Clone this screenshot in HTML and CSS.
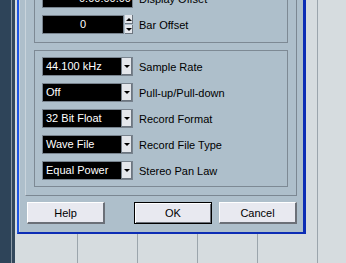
FILE: index.html
```html
<!DOCTYPE html>
<html lang="en">
<head>
    <meta charset="UTF-8">
    <title>Project Setup</title>
    <link rel="stylesheet" href="styles.css">
</head>
<body>
<div class="desk">
    <div class="strip"></div>
    <div class="workspace"></div>

    <div class="dialog">
        <div class="frame">
            <div class="group group-offsets">
                <div class="row">
                    <div class="field wide">0:00:00.00</div>
                    <span class="label">Display Offset</span>
                </div>
                <div class="row">
                    <div class="spin">
                        <div class="field num">0</div>
                        <div class="arrows">
                            <span class="arrow-btn"><i class="tri up"></i></span>
                            <span class="arrow-btn"><i class="tri"></i></span>
                        </div>
                    </div>
                    <span class="label">Bar Offset</span>
                </div>
            </div>

            <div class="group group-format">
                <div class="row">
                    <div class="combo"><span class="value">44.100 kHz</span><span class="drop"><i class="tri"></i></span></div>
                    <span class="label">Sample Rate</span>
                </div>
                <div class="row">
                    <div class="combo"><span class="value">Off</span><span class="drop"><i class="tri"></i></span></div>
                    <span class="label">Pull-up/Pull-down</span>
                </div>
                <div class="row">
                    <div class="combo"><span class="value">32 Bit Float</span><span class="drop"><i class="tri"></i></span></div>
                    <span class="label">Record Format</span>
                </div>
                <div class="row">
                    <div class="combo"><span class="value">Wave File</span><span class="drop"><i class="tri"></i></span></div>
                    <span class="label">Record File Type</span>
                </div>
                <div class="row">
                    <div class="combo"><span class="value">Equal Power</span><span class="drop"><i class="tri"></i></span></div>
                    <span class="label">Stereo Pan Law</span>
                </div>
            </div>
        </div>

        <div class="buttons">
            <button class="btn">Help</button>
            <span class="spacer"></span>
            <button class="btn default">OK</button>
            <button class="btn">Cancel</button>
        </div>
    </div>
</div>
</body>
</html>
```

FILE: styles.css
```css
body {
    margin: 0;
    font-family: "Liberation Sans", Arial, sans-serif;
    font-size: 11px;
    color: #000;
    overflow: hidden;
}
.desk {
    position: relative;
    display: flex;
    width: 346px;
    height: 263px;
    overflow: hidden;
}
.strip {
    width: 15px;
    background: linear-gradient(to right, #2e4459 0 11px, #8c9aa6 11px 12px, #33485c 12px 15px);
}
.workspace {
    flex: 1;
    background-color: #d6dcdf;
    background-image: repeating-linear-gradient(90deg, transparent 0 59px, #9ba5ac 59px 60px);
    background-position: 3px 0;
}

/* dialog window, only its lower part is on screen */
.dialog {
    position: absolute;
    left: 17px;
    bottom: 29px;
    width: 289px;
    box-sizing: border-box;
    background-color: #aebfcb;
    border-left: 2px solid #1f55e2;
    border-right: 3px solid #0c2db5;
    border-bottom: 2px solid #0c2db5;
    box-shadow: inset 1px 0 0 #c9d5de;
    padding: 0 6px 8px 6px;
}
.frame {
    border-left: 1px solid #c9d4dc;
    border-right: 1px solid #7b8792;
    border-bottom: 1px solid #7b8792;
    padding: 8px 8px 8px 8px;
}
.group {
    border: 1px solid #7d8994;
    padding: 6px 7px;
    display: flex;
    flex-direction: column;
    gap: 7px;
}
.group-offsets {
    padding-bottom: 8px;
    margin-bottom: 7px;
}
.row {
    display: flex;
    align-items: center;
    height: 19px;
}
.label {
    margin-left: 6px;
    white-space: nowrap;
}

.field {
    box-sizing: border-box;
    height: 19px;
    line-height: 17px;
    background-color: #000;
    color: #fff;
    border: 1px solid #78838e;
}
.field.wide {
    width: 91px;
    text-align: right;
    padding-right: 1px;
}
.spin {
    display: flex;
    width: 91px;
    gap: 1px;
}
.field.num {
    flex: 1;
    text-align: center;
}
.arrows {
    display: flex;
    flex-direction: column;
    width: 8px;
    gap: 1px;
}
.arrow-btn {
    flex: 1;
    display: flex;
    align-items: center;
    justify-content: center;
    background-color: #e4e7ec;
    border-right: 1px solid #6d7680;
    border-bottom: 1px solid #6d7680;
}

.combo {
    box-sizing: border-box;
    display: flex;
    width: 91px;
    height: 19px;
    border: 1px solid #78838e;
    background-color: #000;
}
.combo .value {
    flex: 1;
    color: #fff;
    line-height: 17px;
    padding-left: 3px;
    white-space: nowrap;
}
.combo .drop {
    width: 10px;
    display: flex;
    align-items: center;
    justify-content: center;
    background-color: #e4e7ec;
    border-left: 1px solid #78838e;
    box-shadow: inset -1px -1px 0 #6d7680;
}
.tri {
    width: 0;
    height: 0;
    border-left: 3px solid transparent;
    border-right: 3px solid transparent;
    border-top: 3px solid #000;
}
.tri.up {
    border-top: none;
    border-bottom: 3px solid #000;
}

.buttons {
    display: flex;
    gap: 7px;
    margin-top: 6px;
    padding-left: 2px;
}
.spacer {
    flex: 1;
}
.btn {
    box-sizing: border-box;
    width: 78px;
    height: 22px;
    padding: 0;
    font-family: "Liberation Sans", Arial, sans-serif;
    font-size: 11px;
    color: #000;
    background-color: #e8e9f0;
    border-top: 1px solid #fff;
    border-left: 1px solid #fff;
    border-right: 2px solid #6b7078;
    border-bottom: 2px solid #6b7078;
}
.btn.default {
    border: 1px solid #000;
    box-shadow: inset 1px 1px 0 #fff, inset -1px -1px 0 #6b7078;
}
```
